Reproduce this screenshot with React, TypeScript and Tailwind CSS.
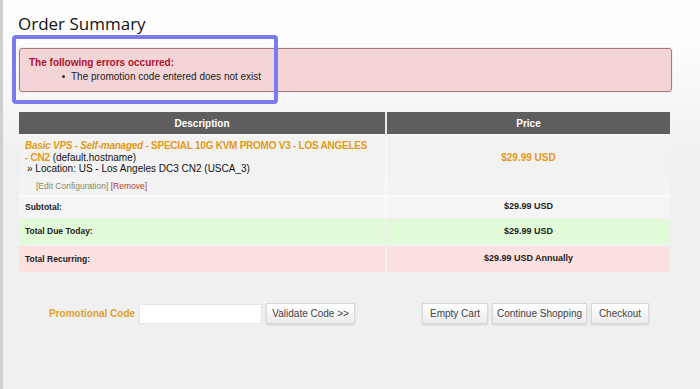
import React from "react";

const btn =
  "h-[21px] whitespace-nowrap text-[10px] text-[#444] bg-gradient-to-b from-white to-[#ececec] border border-[#d8d8d8] shadow-[0_1px_2px_rgba(0,0,0,0.12)]";

export default function App() {
  return (
    <div
      className="w-[700px] h-[389px] overflow-hidden border-l-[3px] border-[#cfcfcf] bg-gradient-to-b from-[#fefefe] from-[8%] to-[#f0f0f0] to-[40%]"
      style={{ fontFamily: '"Liberation Sans", Arial, sans-serif' }}
    >
      <div className="pl-[15px] pr-[28px]">
        <h1
          className="pt-[11px] text-[17px] leading-[25px] text-[#111]"
          style={{ fontFamily: '"Open Sans", sans-serif' }}
        >
          Order Summary
        </h1>
        <div className="relative mt-[12px] ml-[1px] rounded-[3px] border border-[#a87a7c] bg-[#f3d5d7] px-[9px] pt-[7px] pb-[8px] shadow-[0_0_0_1px_#f6eded]">
          <div className="text-[10px] leading-[13px] font-bold text-[#b3102c]">
            The following errors occurred:
          </div>
          <ul className="mt-[1px] pl-[33px] text-[10px] leading-[13px] text-[#222]">
            <li className="flex items-center gap-[6px]">
              <span className="inline-block w-[3px] h-[3px] rounded-full bg-[#333]" />
              The promotion code entered does not exist
            </li>
          </ul>
          <div className="absolute left-[-8px] top-[-14px] w-[266px] h-[69px] rounded-[4px] border-[4px] border-[#7a7af2]" />
        </div>

        <table className="mt-[20px] ml-[1px] w-[651px] border-collapse text-[10px]">
          <thead>
            <tr className="h-[23px] bg-[#5e5e5e] text-white font-bold">
              <th className="w-[367px] border-r-[2px] border-[#e8e8e8] font-bold">Description</th>
              <th className="font-bold">Price</th>
            </tr>
          </thead>
          <tbody>
            <tr className="h-[43px] bg-[#f2f2f2] border-t-[2px] border-[#f6f6f6]">
              <td className="pl-[6px] pr-[2px] pt-[4px] pb-[3px] align-top leading-[11.5px] border-r-[2px] border-[#f8f8f8]">
                <span className="font-bold text-[#e29a17] tracking-[-0.25px]">
                  <i>Basic VPS - Self-managed</i> - SPECIAL 10G KVM PROMO V3 - LOS ANGELES{" "}
                  <span className="whitespace-nowrap">- CN2</span>
                </span>{" "}
                <span className="text-[#111]">(default.hostname)</span>
                <div className="text-[#111] pl-[2px]">» Location: US - Los Angeles DC3 CN2 (USCA_3)</div>
              </td>
              <td className="text-center font-bold text-[#e29a17]">$29.99 USD</td>
            </tr>
            <tr className="h-[18px] bg-[#f3f3f3]">
              <td className="pl-[17px] text-[8.5px] border-r-[2px] border-[#f8f8f8]">
                <span className="text-[#8a8a5c]">[Edit Configuration]</span>{" "}
                <span className="text-[#b33a2c]">[Remove]</span>
              </td>
              <td />
            </tr>
            <tr className="h-[22px] bg-[#f5f5f7] border-t-[2px] border-[#fafafa]">
              <td className="pl-[6px] text-[8.5px] font-bold text-[#222] border-r-[2px] border-[#fafafa]">Subtotal:</td>
              <td className="text-center text-[9px] font-bold text-[#222]">$29.99 USD</td>
            </tr>
            <tr className="h-[27px] bg-[#e1fbd9] border-t-[2px] border-[#f0f0f0]">
              <td className="pl-[6px] text-[8.5px] font-bold text-[#222] border-r-[2px] border-[#f0f0f0]">Total Due Today:</td>
              <td className="text-center text-[9px] font-bold text-[#222]">$29.99 USD</td>
            </tr>
            <tr className="h-[27px] bg-[#fde0e0] border-t-[2px] border-[#f0f0f0]">
              <td className="pl-[6px] text-[8.5px] font-bold text-[#222] border-r-[2px] border-[#f0f0f0]">Total Recurring:</td>
              <td className="text-center text-[9px] font-bold text-[#222]">$29.99 USD Annually</td>
            </tr>
          </tbody>
        </table>

        <div className="mt-[31px] flex items-center">
          <span className="ml-[31px] text-[10px] font-bold text-[#e0a030]">Promotional Code</span>
          <div className="ml-[4px] w-[123px] h-[20px] bg-white border border-[#e4e4e4]" />
          <button className={`ml-[4px] w-[89px] ${btn}`}>Validate Code &gt;&gt;</button>
          <div className="ml-auto mr-[23px] flex gap-[4px]">
            <button className={`w-[66px] ${btn}`}>Empty Cart</button>
            <button className={`w-[95px] ${btn}`}>Continue Shopping</button>
            <button className={`w-[58px] ${btn}`}>Checkout</button>
          </div>
        </div>
      </div>
    </div>
  );
}
